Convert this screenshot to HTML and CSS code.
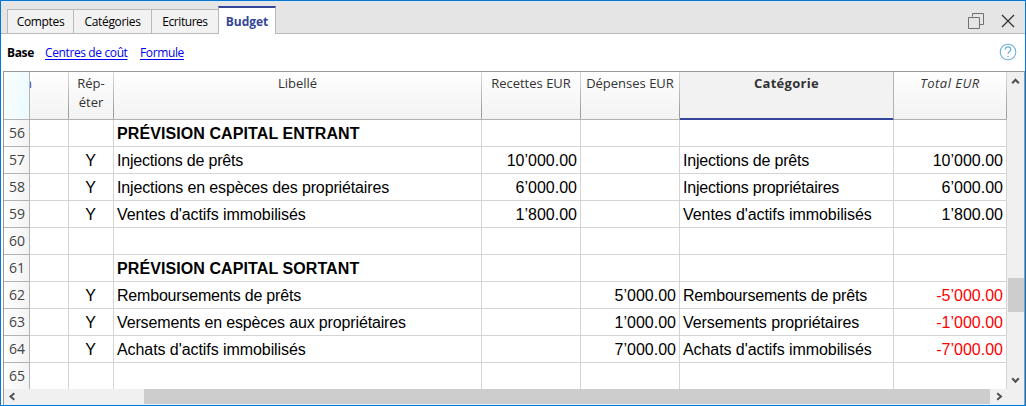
FILE: index.html
```html
<!DOCTYPE html>
<html lang="fr">
<head>
<meta charset="utf-8">
<title>Budget</title>
<link rel="stylesheet" href="styles.css">
</head>
<body>
<div class="window">
  <header class="tabbar">
    <nav class="tabs">
      <div class="tab t1"><span>Comptes</span></div>
      <div class="tab t2"><span>Catégories</span></div>
      <div class="tab t3"><span>Ecritures</span></div>
      <div class="tab active"><span>Budget</span></div>
    </nav>
    <div class="controls">
      <svg width="16" height="16" viewBox="0 0 16 16" fill="none" stroke="#707070"><path d="M4.500 3.500V.5H15.500V11.500H11.500"/><path d="M.5 4.500H11.500V15.500H.5Z"/></svg>
      <svg width="14" height="14" viewBox="0 0 14 14" fill="none" stroke="#333" stroke-width="1.300"><path d="M1 1L13 13M13 1L1 13"/></svg>
    </div>
  </header>
  <div class="views">
    <b class="v1">Base</b><a class="v2">Centres de coût</a><a class="v3">Formule</a>
    <svg class="help" width="18" height="18" viewBox="0 0 18 18" fill="none" stroke="#6cb2dc"><circle cx="9" cy="9" r="7.800" stroke-width="1.100"/><path stroke-width="1.200" d="M6.200 6.700C6.200 4.700 7.400 3.900 9 3.900S11.800 4.800 11.800 6.400C11.800 8.300 9 8.700 9 11M9 12.700V14.100"/></svg>
  </div>
  <main class="sheet">
    <div class="body">
      <div class="grid">
        <div class="corner"></div><div class="h cut"><span>n</span></div><div class="h">Rép-<br>éter</div><div class="h">Libellé</div><div class="h">Recettes EUR</div><div class="h">Dépenses EUR</div><div class="h sel">Catégorie</div><div class="h tot">Total EUR</div>
        <div class="n">56</div><div></div><div></div><div class="title">PRÉVISION CAPITAL ENTRANT</div><div></div><div></div><div></div><div></div>
        <div class="n">57</div><div></div><div class="y">Y</div><div class="tight">Injections de prêts</div><div class="num">10’000.00</div><div></div><div class="tight">Injections de prêts</div><div class="num">10’000.00</div>
        <div class="n">58</div><div></div><div class="y">Y</div><div class="snug">Injections en espèces des propriétaires</div><div class="num">6’000.00</div><div></div><div class="tight">Injections propriétaires</div><div class="num">6’000.00</div>
        <div class="n">59</div><div></div><div class="y">Y</div><div class="near">Ventes d'actifs immobilisés</div><div class="num">1’800.00</div><div></div><div class="near">Ventes d'actifs immobilisés</div><div class="num">1’800.00</div>
        <div class="n">60</div><div></div><div></div><div></div><div></div><div></div><div></div><div></div>
        <div class="n">61</div><div></div><div></div><div class="title">PRÉVISION CAPITAL SORTANT</div><div></div><div></div><div></div><div></div>
        <div class="n">62</div><div></div><div class="y">Y</div><div class="tight">Remboursements de prêts</div><div></div><div class="num">5’000.00</div><div class="tight">Remboursements de prêts</div><div class="num neg">-5’000.00</div>
        <div class="n">63</div><div></div><div class="y">Y</div><div class="snug">Versements en espèces aux propriétaires</div><div></div><div class="num">1’000.00</div><div class="near">Versements propriétaires</div><div class="num neg">-1’000.00</div>
        <div class="n">64</div><div></div><div class="y">Y</div><div class="near">Achats d'actifs immobilisés</div><div></div><div class="num">7’000.00</div><div class="near">Achats d'actifs immobilisés</div><div class="num neg">-7’000.00</div>
        <div class="n">65</div><div></div><div></div><div></div><div></div><div></div><div></div><div></div>
      </div>
      <div class="vscroll">
        <svg class="arrow" width="15" height="17" viewBox="0 0 15 17"><path d="M4.200 11.300L7.500 7.800L10.800 11.300"/></svg>
        <div class="vthumb"></div>
        <svg class="arrow last" width="15" height="17" viewBox="0 0 15 17"><path d="M4.200 6.200L7.500 9.700L10.800 6.200"/></svg>
      </div>
    </div>
    <div class="hscroll">
      <svg class="arrow" width="17" height="15" viewBox="0 0 17 15"><path d="M10.300 4.200L6.500 7.500L10.300 10.800"/></svg>
      <div class="hthumb"></div>
      <svg class="arrow" width="17" height="15" viewBox="0 0 17 15"><path d="M7.200 4.200L11 7.500L7.200 10.800"/></svg>
    </div>
  </main>
</div>
</body>
</html>
```
FILE: styles.css
```css
* { box-sizing: border-box; }
body { margin: 0; overflow: hidden; }
.window {
  width: 1026px; height: 406px;
  border: 1px solid #0078d7;
  background: #fff;
  display: flex; flex-direction: column;
  font: 12px/19px "Open Sans", "Noto Sans", sans-serif;
  color: #000;
}
.tabbar {
  height: 33px;
  background: linear-gradient(#b9b9b9, #b9b9b9) bottom / 100% 1px no-repeat #e5e5e5;
  display: flex; justify-content: space-between;
}
.tabs { display: flex; align-items: flex-end; padding-left: 6px; }
.tab {
  height: 25px;
  border: 1px solid #b9b9b9; border-right: 0;
  background: #f2f2f2;
  text-align: center; line-height: 24px; white-space: nowrap;
  letter-spacing: -0.33px;
}
.t1 { width: 66px; }
.t2 { width: 78px; }
.t3 { width: 67px; letter-spacing: -0.45px; }
.active {
  width: 58px; height: 28px;
  background: #fff; color: #34459a; font-weight: bold;
  border-top: 2px solid #34459a; border-right: 1px solid #b9b9b9; border-bottom: 0;
  line-height: 28px; letter-spacing: 0;
}
.controls { display: flex; align-items: center; gap: 17px; padding: 7px 10px 0 0; }
.views { height: 37px; display: flex; align-items: center; padding: 0 8px 0 6px; letter-spacing: -0.38px; }
.views a { color: #0000f0; text-decoration: underline; text-underline-offset: 2px; white-space: nowrap; }
.v1 { width: 38px; }
.v2 { width: 95px; }
.help { margin-left: auto; margin-top: -2px; }
.sheet {
  height: 334px; width: 1022px; margin-left: 2px;
  border: 1px solid #999; border-bottom: 0; background: #f0f0f0;
}
.body { height: 317px; display: flex; justify-content: space-between; overflow: hidden; }
.grid {
  display: grid; background: #fff;
  grid-template-columns: 26px 39px 45px 368px 99px 99px 214px 113px;
  grid-template-rows: 48px; grid-auto-rows: 27px;
  font: 16px/28px "Liberation Sans", Arial, sans-serif;
  align-content: start;
}
.grid > div {
  border-right: 1px solid #d4d4d4; border-bottom: 1px solid #d4d4d4;
  padding: 0 3px; white-space: nowrap; overflow: hidden;
}
.grid > .corner {
  background: linear-gradient(100deg, #fafdfd, #ebfbff);
  border-color: #b3b3b3;
}
.grid > .h {
  font: 13px/19px "Open Sans", "Noto Sans", sans-serif;
  color: #333; text-align: center; padding-top: 2px;
  background: linear-gradient(#fefefe, #f3f3f3);
  border-right: 1px solid; border-bottom-color: #b3b3b3;
  border-image: linear-gradient(#ddd, #999 90%, #b3b3b3) 1;
  border-top: 0; border-left: 0;
}
.grid > .cut { text-align: left; padding-left: 0; color: #34459a; }
.cut span { margin-left: -6px; }
.grid > .sel {
  font-weight: bold; background: #f2f2f2; letter-spacing: 0.3px;
  box-shadow: inset 0 -1px #34459a;
  border-image: none; border-right-color: #b3b3b3; border-bottom: 1px solid #34459a;
}
.grid > .tot { font-style: italic; letter-spacing: 0.5px; }
.grid > .n {
  font: 14px/26px "Open Sans", "Noto Sans", sans-serif;
  color: #444; text-align: right; padding-right: 4px;
  background: linear-gradient(90deg, #fff, #f3f3f3);
  border-color: #b3b3b3;
}
.grid > .y { text-align: center; padding-right: 4px; }
.grid > .title { font-weight: bold; letter-spacing: 0.09px; }
.grid > .tight { letter-spacing: -0.2px; }
.grid > .snug { letter-spacing: -0.14px; }
.grid > .near { letter-spacing: -0.07px; }
.grid > .num { text-align: right; }
.grid > .neg { color: #f00; }
.vscroll { width: 16px; display: flex; flex-direction: column; }
.vthumb { height: 34px; background: #cdcdcd; margin-top: 189px; }
.last { margin-top: auto; }
.hscroll { height: 15px; width: 1003px; display: flex; justify-content: space-between; }
.hthumb { width: 846px; background: #cdcdcd; margin-left: 123px; }
.arrow { fill: none; stroke: #505050; stroke-width: 2; flex: none; }
```
